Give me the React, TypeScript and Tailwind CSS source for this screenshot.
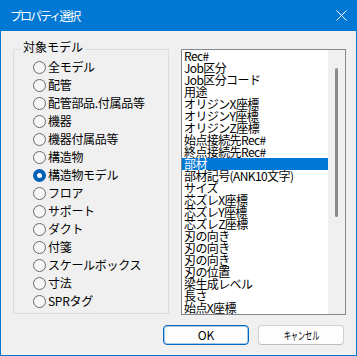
import React from "react";

const models = [
  "全モデル",
  "配管",
  "配管部品.付属品等",
  "機器",
  "機器付属品等",
  "構造物",
  "構造物モデル",
  "フロア",
  "サポート",
  "ダクト",
  "付箋",
  "スケールボックス",
  "寸法",
  "SPRタグ",
];

const items = [
  "Rec#",
  "Job区分",
  "Job区分コード",
  "用途",
  "オリジンX座標",
  "オリジンY座標",
  "オリジンZ座標",
  "始点接続先Rec#",
  "終点接続先Rec#",
  "部材",
  "部材記号(ANK10文字)",
  "サイズ",
  "芯ズレX座標",
  "芯ズレY座標",
  "芯ズレZ座標",
  "刃の向き",
  "刃の向き",
  "刃の向き",
  "刃の位置",
  "梁生成レベル",
  "長さ",
  "始点X座標",
];

function Radio({ checked }: { checked: boolean }) {
  if (checked) {
    return (
      <span className="w-[13px] h-[13px] rounded-full bg-[#005fb8] flex items-center justify-center shrink-0">
        <span className="w-[5px] h-[5px] rounded-full bg-white" />
      </span>
    );
  }
  return (
    <span className="w-[13px] h-[13px] rounded-full border border-[#6a6a6a] bg-[#f6f6f6] shrink-0" />
  );
}

export default function App() {
  return (
    <div className="w-[357px] h-[356px] flex flex-col bg-[#0078d4] font-['Noto_Sans_CJK_JP',sans-serif] text-black">
      <div className="h-[31px] flex items-center pl-[10px] pr-[10px] text-white">
        <span className="text-[12px] tracking-[-2px] leading-none">プロパティ選択</span>
        <svg className="ml-auto" width="11" height="11" viewBox="0 0 11 11">
          <path d="M0.5 0.5 L10.5 10.5 M10.5 0.5 L0.5 10.5" stroke="white" strokeWidth="1" fill="none" />
        </svg>
      </div>
      <div className="flex-1 mx-px mb-px bg-[#f0f0f0] flex flex-col pl-[12px] pr-[10px] pt-[18px]">
        <div className="flex gap-[12px]">
          <div className="relative w-[156px] h-[265px] border border-[#dcdcdc] pt-[8px] pl-[19px]">
            <span className="absolute left-[7px] top-[-11px] px-[2px] bg-[#f0f0f0] text-[12px] leading-[16px]">
              対象モデル
            </span>
            {models.map((m, i) => (
              <div key={i} className="h-[18px] flex items-center">
                <Radio checked={i === 6} />
                <span className="ml-[2px] text-[12px] leading-none whitespace-nowrap tracking-[-0.3px]">{m}</span>
              </div>
            ))}
          </div>
          <div className="w-[165px] h-[266px] border border-[#828790] bg-white flex overflow-hidden">
            <div className="flex-1 flex flex-col overflow-hidden">
              {items.map((t, i) => (
                <div
                  key={i}
                  className={
                    "h-[12px] shrink-0 pl-[2px] text-[12px] leading-[12px] whitespace-nowrap tracking-[-0.6px] " +
                    (i === 9 ? "bg-[#0078d7] text-white" : "")
                  }
                >
                  {t}
                </div>
              ))}
            </div>
            <div className="w-[17px] bg-[#f0f0f0] pt-[18px] pl-[7px]">
              <div className="w-[3px] h-[149px] rounded-full bg-[#8a8a8a]" />
            </div>
          </div>
        </div>
        <div className="flex justify-end gap-[9px] mt-[10px] pr-[2px]">
          <button className="w-[86px] h-[20px] rounded-[4px] border border-[#0067c0] shadow-[inset_0_0_0_1px_rgba(0,103,192,0.35)] bg-[#fdfdfd] flex items-center justify-center text-[12px] leading-none">
            OK
          </button>
          <button className="w-[86px] h-[20px] rounded-[4px] border border-[#d0d0d0] border-b-[#bdbdbd] bg-[#fdfdfd] flex items-center justify-center">
            <span className="inline-block text-[11px] leading-none scale-x-[0.65] whitespace-nowrap">キャンセル</span>
          </button>
        </div>
      </div>
    </div>
  );
}
